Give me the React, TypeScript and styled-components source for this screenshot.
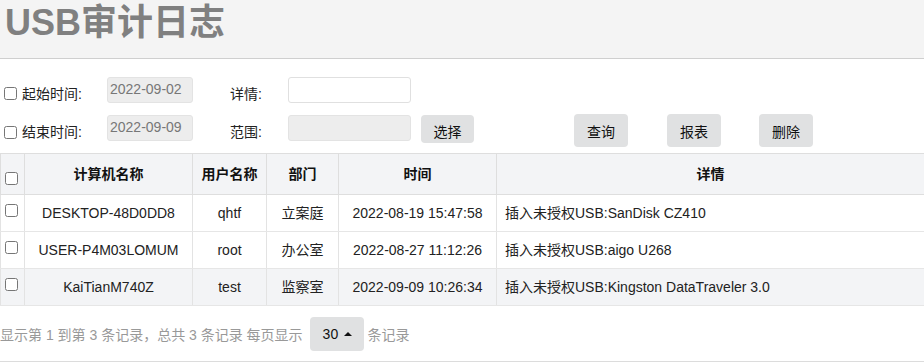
import React from "react";
import styled, { createGlobalStyle } from "styled-components";

const Global = createGlobalStyle`
  html, body { margin: 0; padding: 0; background: #fff; }
  body { font-family: "Liberation Sans", "Noto Sans CJK SC", sans-serif; font-size: 14px; color: #222; }
  * { box-sizing: border-box; }
`;

const Header = styled.div`
  height: 59px;
  background: #f4f4f4;
  border-bottom: 1px solid #cfcfcf;
  padding: 0 0 0 5px;
`;

const Title = styled.h1`
  margin: 0;
  font-size: 36px;
  line-height: 45px;
  font-weight: bold;
  color: #808080;
  font-family: "Liberation Sans", "Noto Sans CJK SC", sans-serif;
`;

const Form = styled.div`
  display: grid;
  grid-template-columns: 103px 123px 58px 133px 153px 93px 92px 80px;
  grid-template-rows: 26px 33px;
  row-gap: 11px;
  padding-left: 4px;
  margin-top: 18px;
`;

const CheckLabel = styled.label<{ $offset: number }>`
  display: flex;
  align-items: center;
  gap: 5px;
  align-self: center;
  padding-top: ${(p) => p.$offset}px;
  color: #222;
  line-height: 16px;
`;

const FieldLabel = styled.span<{ $offset: number }>`
  align-self: center;
  padding-top: ${(p) => p.$offset}px;
  line-height: 16px;
  color: #222;
`;

const Box = styled.input`
  width: 13px;
  height: 13px;
  margin: 0;
  flex: none;
`;

const TextInput = styled.input<{ $w: number; $gray?: boolean; $shift?: boolean }>`
  width: ${(p) => p.$w}px;
  height: 26px;
  margin-top: ${(p) => (p.$shift ? 1 : 0)}px;
  align-self: start;
  border: 1px solid ${(p) => (p.$gray ? "#e3e3e3" : "#e0e0e0")};
  border-radius: 3px;
  background: ${(p) => (p.$gray ? "#ededed" : "#fff")};
  color: #777;
  font: 14px "Liberation Sans", "Noto Sans CJK SC", sans-serif;
  padding: 0 0 2px 2px;
  outline: none;
`;

const Button = styled.button<{ $small?: boolean }>`
  width: ${(p) => (p.$small ? 53 : 54)}px;
  height: ${(p) => (p.$small ? 28 : 33)}px;
  margin-top: ${(p) => (p.$small ? 1 : 0)}px;
  align-self: start;
  border: none;
  border-radius: 4px;
  background: #e0e1e2;
  color: #111;
  font: 14px "Liberation Sans", "Noto Sans CJK SC", sans-serif;
  padding: 0;
  padding-top: ${(p) => (p.$small ? 3 : 0)}px;
  cursor: pointer;
`;

const Table = styled.table`
  margin-top: 6px;
  width: 924px;
  table-layout: fixed;
  border-collapse: collapse;
  border: 1px solid #dedede;
`;

const Th = styled.th`
  height: 41px;
  padding: 0;
  background: #f3f4f6;
  border: 1px solid #dedede;
  font-weight: bold;
  color: #111;
  text-align: center;
  vertical-align: middle;
  line-height: 16px;
`;

const CheckTh = styled(Th)`
  vertical-align: top;
  padding: 18px 0 0 4px;
  text-align: left;
`;

const Row = styled.tr<{ $striped?: boolean }>`
  background: ${(p) => (p.$striped ? "#f3f4f6" : "#fff")};
`;

const Td = styled.td<{ $left?: boolean }>`
  height: 37px;
  padding: 0;
  padding-left: ${(p) => (p.$left ? 8 : 0)}px;
  border-top: 1px solid #e6e6e6;
  border-bottom: 1px solid #e6e6e6;
  border-left: 1px solid #e3e3e3;
  border-right: 1px solid #e3e3e3;
  text-align: ${(p) => (p.$left ? "left" : "center")};
  vertical-align: middle;
  color: #222;
  line-height: 16px;
  white-space: nowrap;
  overflow: hidden;
`;

const CheckTd = styled(Td)`
  vertical-align: top;
  padding: 9px 0 0 4px;
  text-align: left;
`;

const Footer = styled.div`
  display: flex;
  align-items: center;
  height: 56px;
  padding-top: 1px;
  border-bottom: 1px solid #dcdcdc;
  color: #999;
  white-space: pre;
`;

const PageSize = styled.button`
  display: flex;
  align-items: center;
  gap: 6px;
  width: 54px;
  height: 34px;
  margin: 0 4px 0 7px;
  padding: 0 0 0 13px;
  border: none;
  border-radius: 4px;
  background: #e0e1e2;
  color: #111;
  font: 14px "Liberation Sans", "Noto Sans CJK SC", sans-serif;
`;

const Caret = styled.span`
  width: 0;
  height: 0;
  border-left: 4px solid transparent;
  border-right: 4px solid transparent;
  border-bottom: 4px solid #111;
`;

const rows = [
  ["DESKTOP-48D0DD8", "qhtf", "立案庭", "2022-08-19 15:47:58", "插入未授权USB:SanDisk CZ410"],
  ["USER-P4M03LOMUM", "root", "办公室", "2022-08-27 11:12:26", "插入未授权USB:aigo U268"],
  ["KaiTianM740Z", "test", "监察室", "2022-09-09 10:26:34", "插入未授权USB:Kingston DataTraveler 3.0"],
];

export default function App() {
  return (
    <>
      <Global />
      <Header>
        <Title>USB审计日志</Title>
      </Header>
      <Form>
        <CheckLabel $offset={7}>
          <Box type="checkbox" />
          起始时间:
        </CheckLabel>
        <TextInput $w={86} $gray defaultValue="2022-09-02" readOnly />
        <FieldLabel $offset={7}>详情:</FieldLabel>
        <TextInput $w={123} />
        <span />
        <span />
        <span />
        <span />

        <CheckLabel $offset={3}>
          <Box type="checkbox" />
          结束时间:
        </CheckLabel>
        <TextInput $w={86} $gray $shift defaultValue="2022-09-09" readOnly />
        <FieldLabel $offset={3}>范围:</FieldLabel>
        <TextInput $w={123} $gray $shift readOnly />
        <Button $small>选择</Button>
        <Button>查询</Button>
        <Button>报表</Button>
        <Button>删除</Button>
      </Form>
      <Table>
        <colgroup>
          <col style={{ width: 24 }} />
          <col style={{ width: 168 }} />
          <col style={{ width: 74 }} />
          <col style={{ width: 72 }} />
          <col style={{ width: 158 }} />
          <col style={{ width: 428 }} />
        </colgroup>
        <thead>
          <tr>
            <CheckTh>
              <Box type="checkbox" />
            </CheckTh>
            <Th>计算机名称</Th>
            <Th>用户名称</Th>
            <Th>部门</Th>
            <Th>时间</Th>
            <Th>详情</Th>
          </tr>
        </thead>
        <tbody>
          {rows.map((r, i) => (
            <Row key={i} $striped={i === 2}>
              <CheckTd>
                <Box type="checkbox" />
              </CheckTd>
              <Td>{r[0]}</Td>
              <Td>{r[1]}</Td>
              <Td>{r[2]}</Td>
              <Td>{r[3]}</Td>
              <Td $left>{r[4]}</Td>
            </Row>
          ))}
        </tbody>
      </Table>
      <Footer>
        显示第 1 到第 3 条记录，总共 3 条记录 每页显示
        <PageSize>
          30
          <Caret />
        </PageSize>
        条记录
      </Footer>
    </>
  );
}
